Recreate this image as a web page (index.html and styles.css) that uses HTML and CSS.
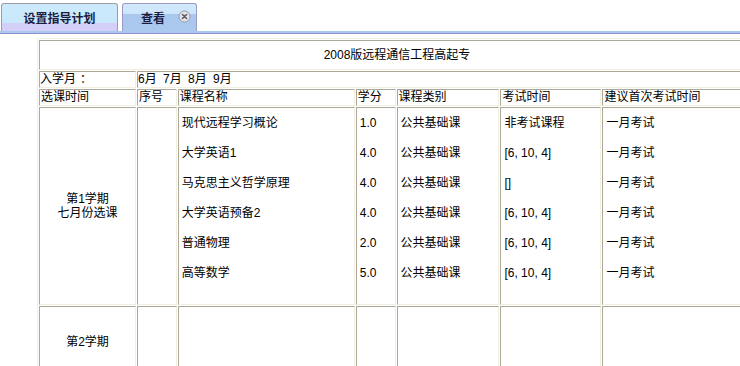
FILE: index.html
```html
<!DOCTYPE html>
<html lang="zh-CN">
<head>
<meta charset="utf-8">
<title>查看</title>
<link rel="stylesheet" href="styles.css">
</head>
<body>
<div class="tabbar">
  <div class="tab tab-inactive">设置指导计划</div>
  <div class="tab tab-active"><span class="tab-label">查看</span><span class="close"><svg width="13" height="13" viewBox="0 0 13 13"><circle cx="6.5" cy="6.5" r="5.5" fill="#e4e4e8" stroke="#9a9aa4" stroke-width="1"/><path d="M4.4 4.4 L8.6 8.6 M8.6 4.4 L4.4 8.6" stroke="#55555f" stroke-width="1.4" stroke-linecap="round"/></svg></span></div>
</div>
<div class="band"></div>
<table class="plan">
  <tr class="r-title"><td colspan="7" class="title">2008版远程通信工程高起专</td></tr>
  <tr class="r-small"><td>入学月<span class="colon">：</span></td><td colspan="6" class="months">6月 7月 8月 9月</td></tr>
  <tr class="r-small head">
    <td class="c1">选课时间</td>
    <td class="c2">序号</td>
    <td class="c3">课程名称</td>
    <td class="c4">学分</td>
    <td class="c5">课程类别</td>
    <td class="c6">考试时间</td>
    <td class="c7">建议首次考试时间</td>
  </tr>
  <tr class="r-term1">
    <td class="period">第1学期<br>七月份选课</td>
    <td class="data"></td>
    <td class="data">
      <div class="item">现代远程学习概论</div>
      <div class="item">大学英语1</div>
      <div class="item">马克思主义哲学原理</div>
      <div class="item">大学英语预备2</div>
      <div class="item">普通物理</div>
      <div class="item">高等数学</div>
    </td>
    <td class="data">
      <div class="item">1.0</div>
      <div class="item">4.0</div>
      <div class="item">4.0</div>
      <div class="item">4.0</div>
      <div class="item">2.0</div>
      <div class="item">5.0</div>
    </td>
    <td class="data">
      <div class="item">公共基础课</div>
      <div class="item">公共基础课</div>
      <div class="item">公共基础课</div>
      <div class="item">公共基础课</div>
      <div class="item">公共基础课</div>
      <div class="item">公共基础课</div>
    </td>
    <td class="data">
      <div class="item">非考试课程</div>
      <div class="item">[6, 10, 4]</div>
      <div class="item">[]</div>
      <div class="item">[6, 10, 4]</div>
      <div class="item">[6, 10, 4]</div>
      <div class="item">[6, 10, 4]</div>
    </td>
    <td class="data">
      <div class="item">一月考试</div>
      <div class="item">一月考试</div>
      <div class="item">一月考试</div>
      <div class="item">一月考试</div>
      <div class="item">一月考试</div>
      <div class="item">一月考试</div>
    </td>
  </tr>
  <tr class="r-term2">
    <td class="period">第2学期</td>
    <td class="data"></td>
    <td class="data"></td>
    <td class="data"></td>
    <td class="data"></td>
    <td class="data"></td>
    <td class="data"></td>
  </tr>
</table>
</body>
</html>
```
FILE: styles.css
```css
html, body {
  margin: 0;
  padding: 0;
  background: #ffffff;
  overflow: hidden;
}
body {
  font-family: "Liberation Sans", "Noto Sans CJK SC", sans-serif;
  font-size: 12px;
  color: #000;
}
.tabbar {
  display: flex;
  align-items: flex-end;
  gap: 4px;
  height: 31px;
  padding-left: 1px;
  box-sizing: border-box;
}
.tab {
  height: 28px;
  box-sizing: border-box;
  border: 1px solid #9c9ca4;
  border-bottom: none;
  border-radius: 3px 3px 0 0;
  display: flex;
  align-items: center;
  font-weight: bold;
  font-size: 12px;
  color: #1c1c40;
  font-family: "Noto Sans CJK SC", sans-serif;
}
.tab-inactive {
  width: 117px;
  justify-content: center;
  background: linear-gradient(#cdeafc 0, #c9e8fc 19px, #d3cff9 19px, #d3cff9 100%);
}
.tab-active {
  width: 75px;
  padding-left: 18px;
  border-color: #9a9ac6;
  background: linear-gradient(#d2e9fb 0, #cbe5fb 10px, #aac8ee 10px, #aac8ee 100%);
}
.tab-label {
  width: 37px;
}
.close {
  display: flex;
  width: 13px;
  height: 13px;
  margin-top: -3px;
}
.band {
  height: 2px;
  background: #aac8ee;
  border-bottom: 1px solid #8e8ed2;
}
.plan {
  border-collapse: separate;
  border-spacing: 1px;
  border: 1px solid;
  border-color: #f1efe2 #aca899 #aca899 #f1efe2;
  margin: 4px 0 0 37px;
  width: 720px;
  font-size: 12px;
  white-space: nowrap;
}
.plan td {
  border: 1px solid;
  border-color: #aca899 #f1efe2 #f1efe2 #aca899;
  padding: 0;
  line-height: 15px;
  vertical-align: middle;
  text-align: left;
}
.colon {
  padding-left: 4px;
}
.r-title td {
  height: 28px;
}
.plan td.title {
  text-align: center;
}
.r-small td {
  height: 15px;
}
.months {
  word-spacing: 3px;
}
.c1 { width: 95px; }
.c2 { width: 37px; }
.c3 { width: 176px; }
.c4 { width: 37px; }
.c5 { width: 101px; }
.c6 { width: 99px; }
.c7 { width: 151px; }
.head td {
  padding-left: 1px;
}
.r-term1 td {
  height: 196px;
}
.r-term2 td {
  height: 69px;
}
.plan td.period {
  text-align: center;
  line-height: 14px;
}
.plan td.data {
  vertical-align: top;
}
.item {
  height: 30px;
  line-height: 30px;
  padding-left: 3px;
}
```
